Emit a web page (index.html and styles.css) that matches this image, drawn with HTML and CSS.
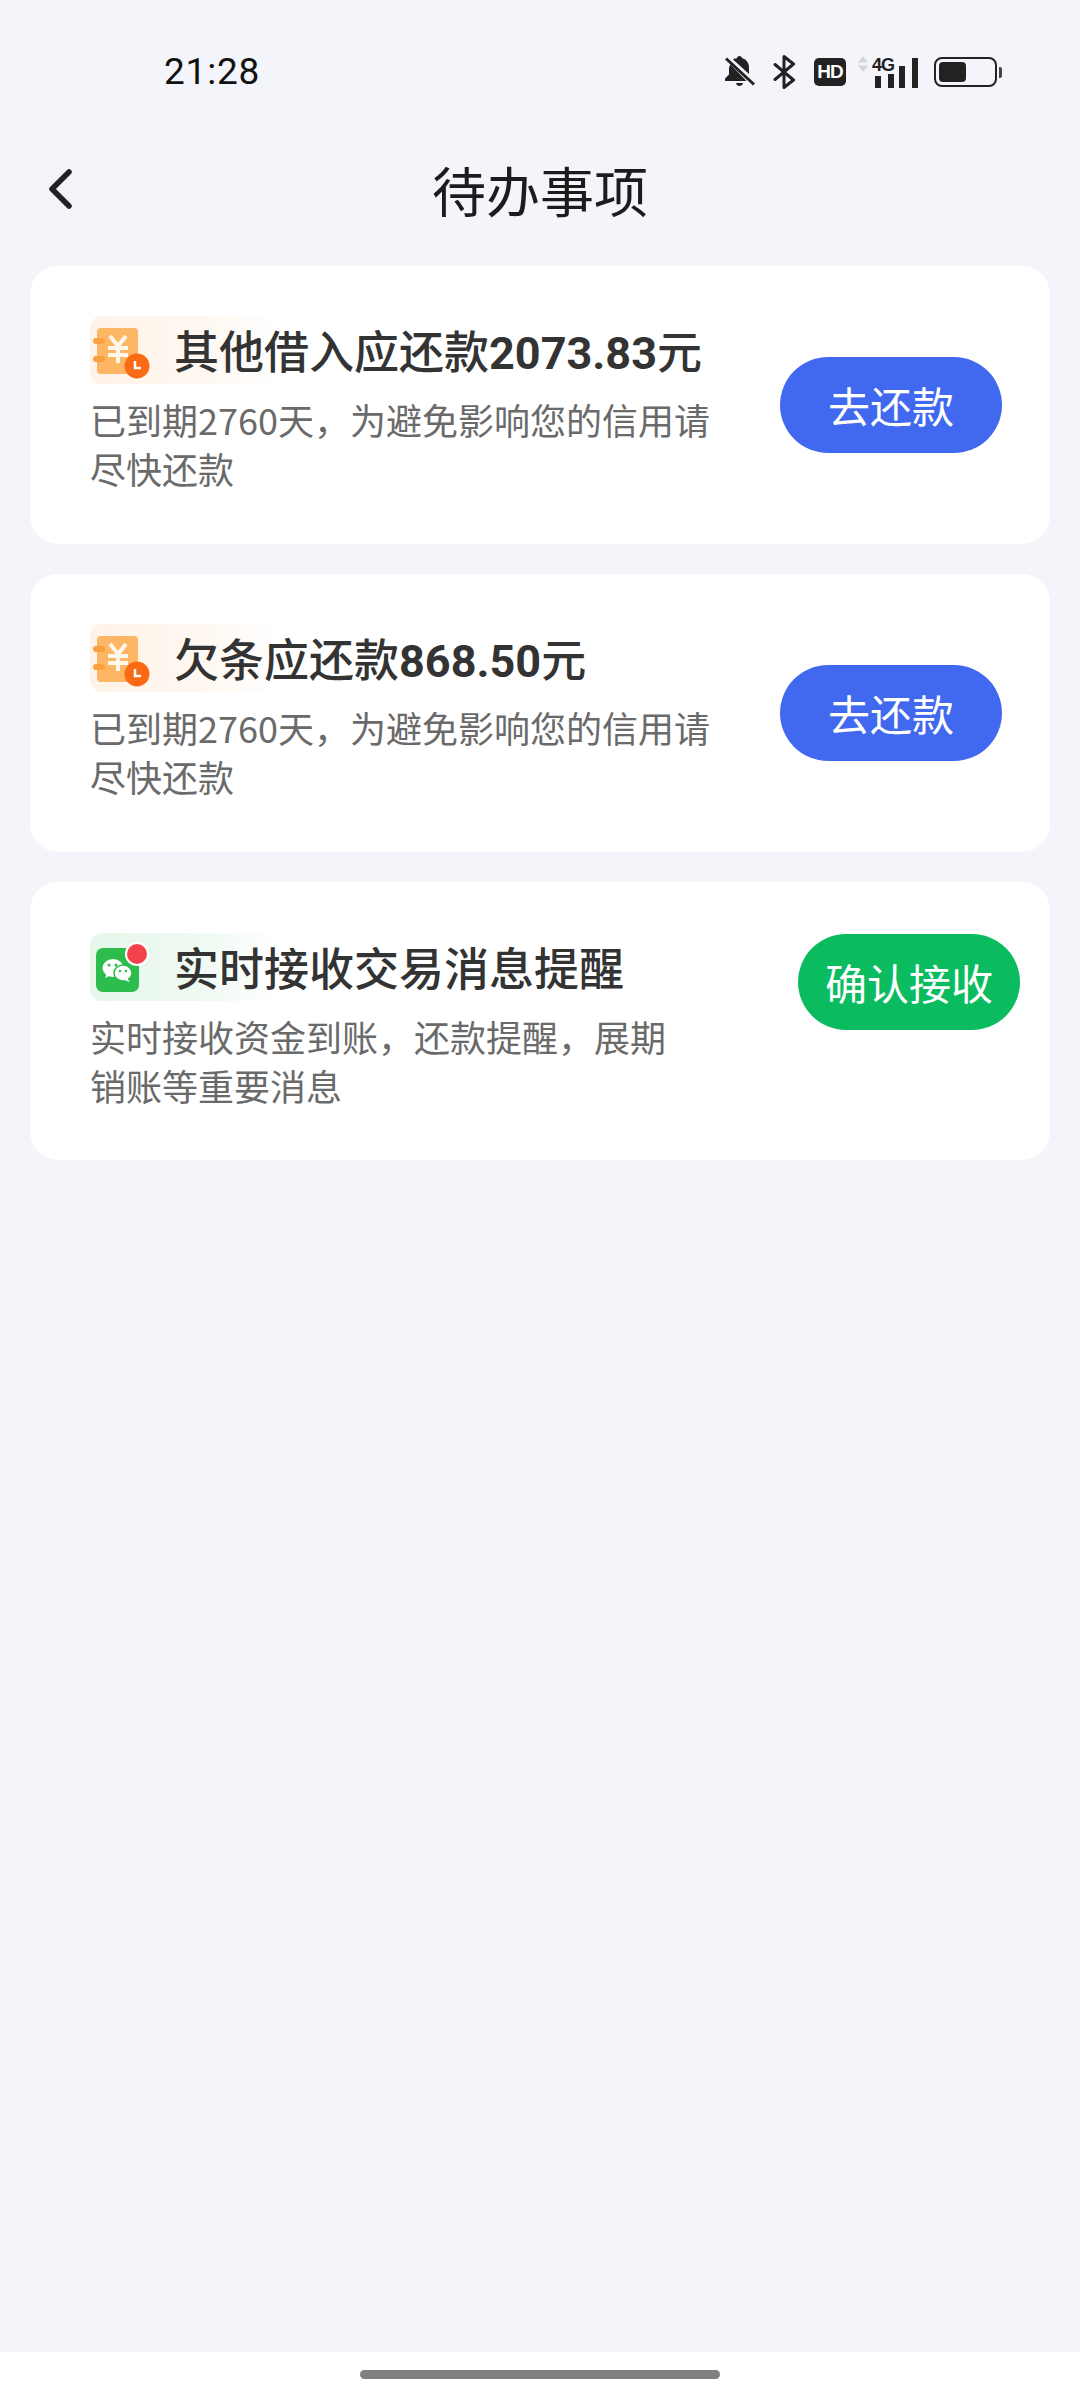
FILE: index.html
```html
<!DOCTYPE html>
<html lang="zh-CN">
<head>
    <meta charset="utf-8">
    <title>待办事项</title>
    <link rel="stylesheet" href="styles.css">
</head>
<body>
    <div class="status-bar">
        <span class="time">21:28</span>
        <div class="status-icons">
            <svg class="ic-bell" width="32" height="34" viewBox="0 0 32 34">
                <path d="M15.500 1c1.500 0 2.500 1 2.700 2.300 4.300 1.200 6.800 4.800 6.800 9.200v6.500L9 4.500c.8-.5 1.700-.9 3.800-1.200.2-1.300 1.200-2.300 2.700-2.300z" fill="#222"/>
                <path d="M6.500 9.500 22.500 26H1v-2.500l4-4v-6c0-1.500.5-2.800 1.500-4z" fill="#222"/>
                <path d="M12 28h7c-.4 2-1.700 3-3.500 3s-3.100-1-3.500-3z" fill="#222"/>
                <path d="M2 3.500 30 29.500" stroke="#222" stroke-width="3"/>
            </svg>
            <svg class="ic-bt" width="24" height="34" viewBox="0 0 24 34">
                <path d="M2 9.500 20.500 25 11 32.500V1.500L20.500 9 2 24.500" fill="none" stroke="#222" stroke-width="3" stroke-linejoin="round" stroke-linecap="round"/>
            </svg>
            <span class="ic-hd">HD</span>
            <div class="ic-signal">
                <svg class="arrows" width="10" height="16" viewBox="0 0 10 16">
                    <path d="M5 0 10 6.500H0z" fill="#d4d5d8"/>
                    <path d="M5 16 10 9.500H0z" fill="#d4d5d8"/>
                </svg>
                <div class="net">
                    <span class="net-label">4G</span>
                    <div class="bars">
                        <i class="bar-1"></i>
                        <i class="bar-2"></i>
                    </div>
                </div>
                <i class="bar-3"></i>
                <i class="bar-4"></i>
            </div>
            <div class="ic-battery">
                <div class="battery-body"><i></i></div>
                <i class="battery-tip"></i>
            </div>
        </div>
    </div>

    <header class="nav-bar">
        <svg class="back" width="26" height="40" viewBox="0 0 26 40">
            <path d="M22 3 5 20l17 17" fill="none" stroke="#222" stroke-width="5.500" stroke-linecap="round" stroke-linejoin="round"/>
        </svg>
        <h1>待办事项</h1>
    </header>

    <main class="todo-list">
        <section class="card">
            <div class="card-body">
                <div class="card-title">
                    <span class="badge badge-orange">
                        <svg width="60" height="60" viewBox="0 0 60 60">
                            <use href="#note-icon"/>
                        </svg>
                    </span>
                    <h2>其他借入应还款<b>2073.83</b>元</h2>
                </div>
                <p>已到期2760天，为避免影响您的信用请尽快还款</p>
            </div>
            <a class="btn btn-blue">去还款</a>
        </section>

        <section class="card">
            <div class="card-body">
                <div class="card-title">
                    <span class="badge badge-orange">
                        <svg width="60" height="60" viewBox="0 0 60 60">
                            <use href="#note-icon"/>
                        </svg>
                    </span>
                    <h2>欠条应还款<b>868.50</b>元</h2>
                </div>
                <p>已到期2760天，为避免影响您的信用请尽快还款</p>
            </div>
            <a class="btn btn-blue">去还款</a>
        </section>

        <section class="card card-wechat">
            <div class="card-body">
                <div class="card-title">
                    <span class="badge badge-green">
                        <svg width="60" height="60" viewBox="0 0 60 60">
                            <rect x="6" y="11" width="43" height="44" rx="7" fill="#2dbd4e"/>
                            <ellipse cx="23" cy="31" rx="10.500" ry="9" fill="#fff"/>
                            <path d="M17 36l-2 5 6-3z" fill="#fff"/>
                            <ellipse cx="33" cy="36" rx="9" ry="8" fill="#fff" stroke="#2dbd4e" stroke-width="1.500"/>
                            <path d="M37 41l3 4-6-2z" fill="#fff"/>
                            <circle cx="19" cy="28" r="1.500" fill="#2dbd4e"/>
                            <circle cx="26" cy="28" r="1.500" fill="#2dbd4e"/>
                            <circle cx="30" cy="34" r="1.300" fill="#2dbd4e"/>
                            <circle cx="36" cy="34" r="1.300" fill="#2dbd4e"/>
                            <circle cx="47" cy="17" r="12" fill="#fff"/>
                            <circle cx="47" cy="17" r="10" fill="#f4424a"/>
                        </svg>
                    </span>
                    <h2>实时接收交易消息提醒</h2>
                </div>
                <p>实时接收资金到账，还款提醒，展期销账等重要消息</p>
            </div>
            <a class="btn btn-green">确认接收</a>
        </section>
    </main>

    <footer class="home-bar"><i></i></footer>

    <svg class="defs" width="0" height="0">
        <defs>
            <g id="note-icon">
                <rect x="7" y="8" width="41" height="46" rx="4" fill="#fdb664"/>
                <rect x="3" y="18" width="12" height="6" rx="3" fill="#f9a03f"/>
                <rect x="3" y="36" width="12" height="6" rx="3" fill="#f9a03f"/>
                <path d="M20 16l8 10 8-10M18 28h20M18 35h20M28 26v17" fill="none" stroke="#fff7ec" stroke-width="4"/>
                <circle cx="47" cy="46" r="12.500" fill="#fa6a14"/>
                <path d="M45 41v7h6" fill="none" stroke="#fff" stroke-width="2.500"/>
            </g>
        </defs>
    </svg>
</body>
</html>
```

FILE: styles.css
```css
* {
    box-sizing: border-box;
}

html, body {
    margin: 0;
    padding: 0;
}

body {
    width: 1080px;
    height: 2400px;
    display: flex;
    flex-direction: column;
    background: #f4f5fb;
    font-family: "Noto Sans CJK SC", "Noto Sans", sans-serif;
    color: #333;
}

.defs {
    position: absolute;
}

/* status bar */
.status-bar {
    height: 114px;
    padding: 30px 78px 0 164px;
    flex: none;
    display: flex;
    align-items: center;
    justify-content: space-between;
}

.time {
    font: 37px/50px Roboto, sans-serif;
    color: #111;
    letter-spacing: 0.8px;
}

.status-icons {
    display: flex;
    align-items: center;
    height: 34px;
}

.ic-bell {
    margin-right: 17px;
}

.ic-bt {
    margin-right: 17px;
}

.ic-hd {
    width: 32px;
    height: 28px;
    margin-right: 12px;
    border-radius: 5px;
    background: #222;
    color: #fff;
    font: bold 19px/28px "Liberation Sans", sans-serif;
    text-align: center;
    letter-spacing: -1px;
}

.ic-signal {
    display: flex;
    align-items: flex-end;
    height: 32px;
    margin-right: 16px;
}

.ic-signal .arrows {
    align-self: flex-start;
    margin-right: 4px;
}

.net {
    display: flex;
    flex-direction: column;
    width: 24px;
    margin-right: 3px;
}

.net-label {
    font: bold 18px/16px "Liberation Sans", sans-serif;
    color: #222;
    letter-spacing: -1px;
    margin-bottom: 1px;
}

.bars {
    display: flex;
    justify-content: space-between;
    padding: 0 2px 0 3px;
    align-items: flex-end;
}

.bars i {
    width: 6px;
    height: 12px;
    background: #222;
}

.bars .bar-2 {
    height: 14px;
}

.ic-signal > i {
    width: 6px;
    background: #222;
}

.ic-signal .bar-3 {
    height: 22px;
    margin-right: 7px;
}

.ic-signal .bar-4 {
    height: 30px;
}

.ic-battery {
    display: flex;
    align-items: center;
}

.battery-body {
    width: 63px;
    height: 30px;
    padding: 3px;
    border: 2px solid #222;
    border-radius: 8px;
}

.battery-body i {
    display: block;
    width: 27px;
    height: 20px;
    border-radius: 4px;
    background: #222;
}

.battery-tip {
    width: 3px;
    height: 11px;
    margin-left: 2px;
    background: #444;
    border-radius: 0 2px 2px 0;
}

/* title */
.nav-bar {
    position: relative;
    height: 152px;
    flex: none;
    display: flex;
    align-items: center;
    justify-content: center;
}

.nav-bar h1 {
    margin: 0;
    font-size: 54px;
    font-weight: 400;
    line-height: 72px;
    color: #1c1c1c;
}

.back {
    position: absolute;
    left: 47px;
    top: 55px;
}

/* list */
.todo-list {
    flex: 1;
    display: flex;
    flex-direction: column;
    gap: 30px;
    padding: 0 30px;
}

.card {
    height: 278px;
    padding: 0 48px 0 60px;
    display: flex;
    align-items: center;
    justify-content: space-between;
    border-radius: 28px;
    background: #fff;
}

.card-body {
    width: 630px;
}

.card-title {
    display: flex;
    align-items: center;
    height: 68px;
    margin-top: -1px;
    margin-bottom: 11px;
}

.card-title h2 {
    margin: 0;
    padding-top: 4px;
    font-size: 45px;
    font-weight: 500;
    line-height: 60px;
    color: #333;
    white-space: nowrap;
}

.card-title b {
    font: bold 45px/60px Roboto, sans-serif;
}

.badge {
    width: 190px;
    height: 68px;
    margin-right: -106px;
    flex: none;
    display: flex;
    align-items: center;
    border-radius: 12px;
}

.badge svg {
    flex: none;
}

.badge-orange {
    background: linear-gradient(90deg, #fff3e8, #fff8f2 60%, #fff);
}

.badge-green {
    background: linear-gradient(90deg, #e6f6ea, #f0faf3 60%, #fff);
}

.card-body p {
    margin: 0;
    width: 620px;
    font-size: 36px;
    line-height: 49px;
    color: #6a6a6a;
}

.btn {
    flex: none;
    width: 222px;
    height: 96px;
    border-radius: 48px;
    color: #fff;
    font-size: 42px;
    line-height: 96px;
    text-align: center;
}

.btn-blue {
    background: #4169ef;
}

.btn-green {
    background: #0abc5f;
}

.card-wechat {
    padding-right: 30px;
    align-items: flex-start;
    padding-top: 52px;
}

.card-wechat .card-title h2 {
    padding-top: 0;
}

.card-wechat p {
    width: 580px;
}

/* gesture bar */
.home-bar {
    height: 48px;
    flex: none;
    display: flex;
    justify-content: center;
    padding-top: 18px;
    background: #fff;
}

.home-bar i {
    width: 360px;
    height: 9px;
    border-radius: 5px;
    background: #808080;
}
```
